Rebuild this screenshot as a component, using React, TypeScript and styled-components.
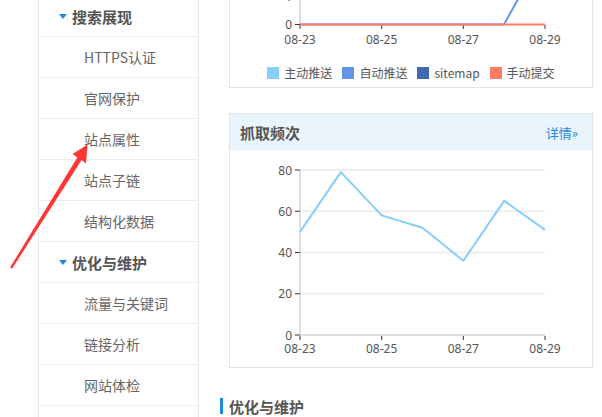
import React from 'react'
import styled, { createGlobalStyle } from 'styled-components'

const GlobalStyle = createGlobalStyle`
  html, body {
    margin: 0;
    padding: 0;
    background: #fff;
    overflow: hidden;
  }
  body {
    font-family: "Noto Sans CJK SC", "Noto Sans", sans-serif;
  }
`

const navGroups = [
  { title: '搜索展现', items: ['HTTPS认证', '官网保护', '站点属性', '站点子链', '结构化数据'] },
  { title: '优化与维护', items: ['流量与关键词', '链接分析', '网站体检', ''] },
]

const legend = [
  { label: '主动推送', color: '#87cefa' },
  { label: '自动推送', color: '#6495ed' },
  { label: 'sitemap', color: '#4068b0' },
  { label: '手动提交', color: '#ff7b63' },
]

// crawl frequency, 08-23 .. 08-29
const crawl = [50, 79, 58, 52, 36, 65, 51]
const xTicks = ['08-23', '08-25', '08-27', '08-29']

const X0 = 300
const X1 = 545
const stepX = (X1 - X0) / (crawl.length - 1)
const yOf = (v: number) => 335 - v * (165 / 80)

export default function App() {
  return (
    <>
      <GlobalStyle />
      <Page>
        <Sidebar>
          {navGroups.map((group) => (
            <React.Fragment key={group.title}>
              <GroupHeader>
                <Caret />
                {group.title}
              </GroupHeader>
              {group.items.map((item, i) => (
                <NavItem key={group.title + i}>{item}</NavItem>
              ))}
            </React.Fragment>
          ))}
        </Sidebar>

        <Main>
          <Panel $cutTop>
            <ChartSvg width={362} height={56} viewBox='230 0 362 56'>
              <line x1={X0} y1={0} x2={X0} y2={25} stroke='#dedede' strokeWidth={2} />
              <AxisText x={292} y={1} textAnchor='end'>1</AxisText>
              <AxisText x={292} y={29} textAnchor='end'>0</AxisText>
              <line x1={295} y1={24.5} x2={300} y2={24.5} stroke='#333' strokeWidth={1} />
              {xTicks.map((t, i) => {
                const x = X0 + i * stepX * 2
                return (
                  <g key={t}>
                    <line x1={x} y1={25} x2={x} y2={29} stroke='#333' strokeWidth={1} />
                    <AxisText x={x} y={43.5} textAnchor='middle'>{t}</AxisText>
                  </g>
                )
              })}
              <polyline points='300,24.5 504,24.5 522,-8' fill='none' stroke='#6495ed' strokeWidth={2} />
              <line x1={X0} y1={24.5} x2={X1} y2={24.5} stroke='#ff7b63' strokeWidth={2} />
            </ChartSvg>
            <Legend>
              {legend.map((l) => (
                <LegendItem key={l.label}>
                  <Swatch $color={l.color} />
                  {l.label}
                </LegendItem>
              ))}
            </Legend>
          </Panel>

          <Panel>
            <PanelHeader>
              <PanelTitle>抓取频次</PanelTitle>
              <MoreLink>详情»</MoreLink>
            </PanelHeader>
            <ChartSvg width={362} height={217} viewBox='230 150 362 217'>
              {[80, 60, 40, 20].map((v) => (
                <line key={v} x1={X0} y1={yOf(v)} x2={X1} y2={yOf(v)} stroke='#eeeeee' strokeWidth={2} />
              ))}
              <line x1={X0} y1={170} x2={X0} y2={336} stroke='#dedede' strokeWidth={2} />
              <line x1={X0} y1={335} x2={X1} y2={335} stroke='#dedede' strokeWidth={2} />
              {[80, 60, 40, 20, 0].map((v) => (
                <g key={v}>
                  <line x1={295} y1={yOf(v)} x2={300} y2={yOf(v)} stroke='#333' strokeWidth={1} />
                  <AxisText x={292} y={yOf(v) + 4.5} textAnchor='end'>{v}</AxisText>
                </g>
              ))}
              {xTicks.map((t, i) => {
                const x = X0 + i * stepX * 2
                return (
                  <g key={t}>
                    <line x1={x} y1={336} x2={x} y2={340} stroke='#333' strokeWidth={1} />
                    <AxisText x={x} y={353} textAnchor='middle'>{t}</AxisText>
                  </g>
                )
              })}
              <polyline
                points={crawl.map((v, i) => `${X0 + i * stepX},${yOf(v)}`).join(' ')}
                fill='none'
                stroke='#87cefa'
                strokeWidth={2}
                strokeLinejoin='round'
              />
            </ChartSvg>
          </Panel>

          <SectionTitle>优化与维护</SectionTitle>
        </Main>

        <Arrow width={100} height={130} viewBox='0 140 100 130'>
          <polygon
            points='10,267.5 77.3,157.4 72.7,154 87.5,144.5 86,163.5 81.6,160 12.2,268.5'
            fill='#ff3636'
          />
        </Arrow>
      </Page>
    </>
  )
}

const Page = styled.div`
  position: relative;
  display: flex;
  align-items: flex-start;
  width: 602px;
  height: 417px;
  padding-left: 38px;
  box-sizing: border-box;
  overflow: hidden;
`

const Sidebar = styled.nav`
  width: 161px;
  flex-shrink: 0;
  margin-top: -4px;
  border-left: 1px solid #e8e8e8;
  border-right: 1px solid #e8e8e8;
  box-sizing: border-box;
`

const GroupHeader = styled.div`
  display: flex;
  align-items: center;
  height: 40px;
  padding-left: 20px;
  border-bottom: 1px solid #ececec;
  font-size: 15px;
  font-weight: 700;
  color: #555;
`

const Caret = styled.span`
  width: 0;
  height: 0;
  margin-right: 5px;
  border-left: 4px solid transparent;
  border-right: 4px solid transparent;
  border-top: 5px solid #1e88e5;
`

const NavItem = styled.div`
  display: flex;
  align-items: center;
  height: 40px;
  padding-left: 45px;
  border-bottom: 1px solid #ececec;
  font-size: 14px;
  color: #666;
`

const Main = styled.main`
  display: flex;
  flex-direction: column;
  margin-left: 21px;
  width: 373px;
`

const Panel = styled.section<{ $cutTop?: boolean }>`
  margin-left: 9px;
  width: 364px;
  box-sizing: border-box;
  border: 1px solid #e3e3e3;
  border-top: ${(p) => (p.$cutTop ? 'none' : '1px solid #e3e3e3')};
  margin-bottom: ${(p) => (p.$cutTop ? '25px' : '30px')};
  background: #fff;
`

const ChartSvg = styled.svg`
  display: block;
`

const AxisText = styled.text`
  font-family: "Noto Sans", "Noto Sans CJK SC", sans-serif;
  font-size: 12px;
  fill: #555;
`

const Legend = styled.div`
  display: flex;
  justify-content: center;
  gap: 10px;
  margin-top: 9px;
  padding-bottom: 6px;
`

const LegendItem = styled.span`
  display: flex;
  align-items: center;
  gap: 5px;
  font-size: 12px;
  line-height: 16px;
  color: #555;
`

const Swatch = styled.span<{ $color: string }>`
  width: 12px;
  height: 12px;
  background: ${(p) => p.$color};
`

const PanelHeader = styled.header`
  display: flex;
  align-items: center;
  justify-content: space-between;
  height: 36px;
  padding: 0 14px 0 10px;
  background: #eaf4fc;
`

const PanelTitle = styled.h3`
  margin: 0;
  font-size: 15px;
  font-weight: 700;
  color: #555;
`

const MoreLink = styled.a`
  font-size: 13px;
  color: #1e88e5;
  text-decoration: none;
`

const SectionTitle = styled.h2`
  margin: 0;
  padding-left: 6px;
  border-left: 3px solid #1e88e5;
  height: 16px;
  display: flex;
  align-items: center;
  font-size: 15px;
  font-weight: 700;
  color: #555;
`

const Arrow = styled.svg`
  position: absolute;
  left: 0;
  top: 140px;
  pointer-events: none;
`
